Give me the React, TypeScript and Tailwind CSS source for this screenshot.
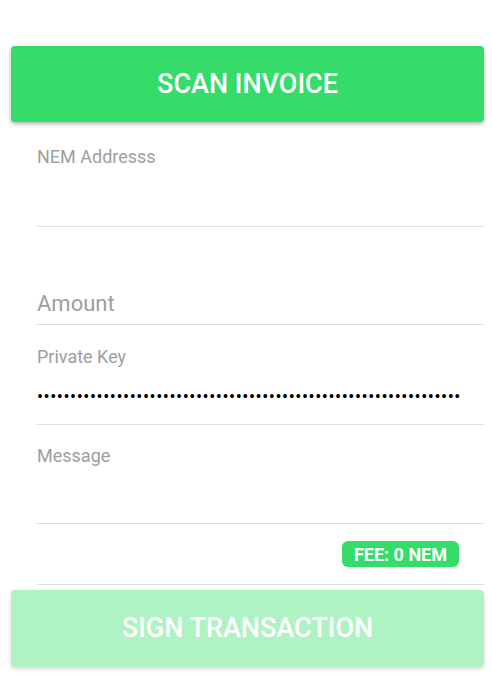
import React from "react";

export default function App() {
  const dots = "•".repeat(64);
  return (
    <div className="w-[492px] h-[676px] bg-white overflow-hidden" style={{ fontFamily: "Roboto, 'Liberation Sans', sans-serif" }}>
      <div className="pt-[46px] pl-[11px] pr-[8px]">
        <button className="w-full h-[76px] rounded-[4px] bg-[#35dc69] text-white text-[27px] font-medium shadow-[0_2px_4px_rgba(0,0,0,0.3)] flex items-center justify-center">
          SCAN INVOICE
        </button>
      </div>
      <div className="pl-[37px] pr-[8px]">
        <div className="h-[105px] border-b border-[#e0e0e0] pt-[23px]">
          <div className="text-[18px] leading-[24px] text-[#9e9e9e]">NEM Addresss</div>
        </div>
        <div className="h-[98px] border-b border-[#e0e0e0] flex items-end pb-[6px]">
          <div className="text-[22px] leading-[28px] text-[#9e9e9e]">Amount</div>
        </div>
        <div className="h-[100px] border-b border-[#e0e0e0] pt-[20px]">
          <div className="text-[18px] leading-[24px] text-[#9e9e9e]">Private Key</div>
          <div className="mt-[16px] text-[18px] leading-[24px] text-black tracking-[0.55px] whitespace-nowrap overflow-hidden w-[424px]">{dots}</div>
        </div>
        <div className="h-[99px] border-b border-[#e0e0e0] pt-[19px]">
          <div className="text-[18px] leading-[24px] text-[#9e9e9e]">Message</div>
        </div>
        <div className="h-[61px] border-b border-[#e0e0e0] flex items-center justify-end pr-[25px]">
          <div className="h-[26px] px-[12px] rounded-[6px] bg-[#35dc69] text-white text-[18px] font-bold flex items-center">FEE: 0 NEM</div>
        </div>
      </div>
      <div className="pt-[5px] pl-[11px] pr-[8px]">
        <button className="w-full h-[77px] rounded-[4px] bg-[#aff2c3] text-white text-[27px] font-medium shadow-[0_2px_4px_rgba(0,0,0,0.15)] flex items-center justify-center">
          SIGN TRANSACTION
        </button>
      </div>
    </div>
  );
}
